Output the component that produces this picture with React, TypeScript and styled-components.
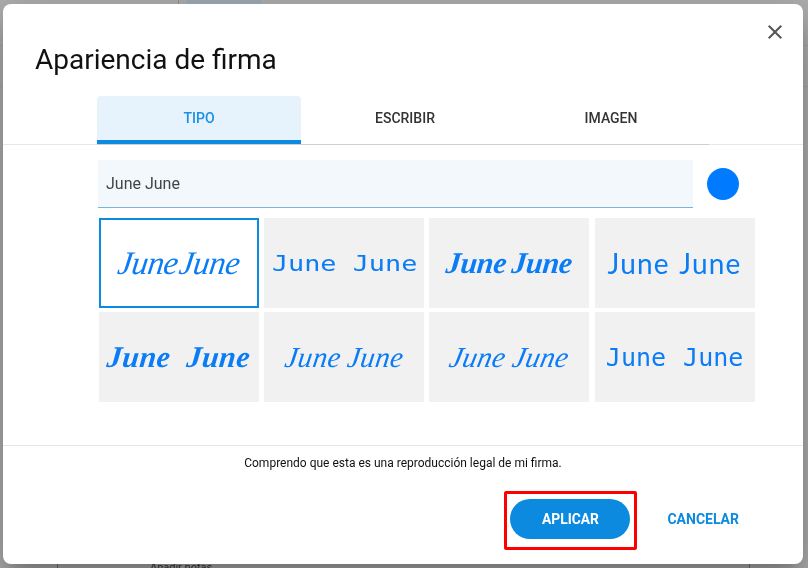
import React from "react";
import styled, { createGlobalStyle } from "styled-components";

const GlobalStyle = createGlobalStyle`
  html, body {
    margin: 0;
    height: 100%;
    overflow: hidden;
    font-family: Roboto, "Liberation Sans", sans-serif;
  }
`;

/* the document that sits dimmed behind the dialog */
const Page = styled.div`
  width: 808px;
  height: 568px;
  background: #adadad;
  display: flex;
  flex-direction: column;
  overflow: hidden;
`;

const PageBar = styled.div`
  height: 46px;
  flex: none;
  box-sizing: border-box;
  display: flex;
  align-items: flex-start;
  border-bottom: 1px solid #a2a2a2;
`;

const BarTool = styled.div`
  width: 59px;
  height: 4px;
  margin-left: 50px;
  overflow: hidden;
`;

const BarDivider = styled.div`
  width: 1px;
  height: 5px;
  margin-left: 69px;
  background: #8f8f8f;
`;

const BarActive = styled.div`
  width: 74px;
  height: 4px;
  margin-left: 8px;
  background: #9daab5;
  overflow: hidden;
`;

const PageBarLow = styled.div`
  height: 41px;
  flex: none;
  box-sizing: border-box;
  border-bottom: 1px solid #a2a2a2;
`;

const PageBody = styled.div`
  flex: 1;
  display: flex;
  align-items: flex-end;
  padding-left: 57px;
`;

const PageSheet = styled.div`
  width: 693px;
  height: 14px;
  box-sizing: border-box;
  padding: 7px 0 0 92px;
  border-left: 1px solid #6f6f6f;
  border-right: 1px solid #6f6f6f;
  font-size: 11px;
  line-height: 14px;
  white-space: nowrap;
  color: #333;
`;

const Overlay = styled.div`
  position: fixed;
  inset: 0;
  display: flex;
  align-items: center;
  justify-content: center;
  padding-right: 2px;
`;

const Dialog = styled.div`
  width: 800px;
  height: 560px;
  background: #fff;
  border-radius: 8px;
  display: flex;
  flex-direction: column;
  position: relative;
  box-shadow: 0 11px 15px -7px rgba(0, 0, 0, 0.2), 0 24px 38px 3px rgba(0, 0, 0, 0.14),
    0 9px 46px 8px rgba(0, 0, 0, 0.12);
`;

const CloseButton = styled.button`
  position: absolute;
  top: 16px;
  right: 16px;
  width: 24px;
  height: 24px;
  padding: 0;
  border: 0;
  background: none;
  color: #555;
  display: flex;
`;

const Title = styled.h2`
  margin: 0;
  padding: 38px 0 0 32px;
  height: 92px;
  box-sizing: border-box;
  font-size: 28px;
  line-height: 36px;
  font-weight: 400;
  color: #111;
`;

const TabsRow = styled.div`
  flex: none;
  padding-left: 94px;
  border-bottom: 1px solid #e8e8e8;
  height: 49px;
  box-sizing: border-box;
`;

const TabList = styled.div`
  display: flex;
  gap: 2px;
  width: 612px;
  height: 49px;
  box-sizing: border-box;
  border-bottom: 1px solid #cfcfcf;
`;

const Tab = styled.div<{ $active?: boolean }>`
  flex: none;
  width: 204px;
  height: 48px;
  box-sizing: border-box;
  display: flex;
  align-items: center;
  justify-content: center;
  font-size: 14px;
  font-weight: 500;
  border-radius: 4px 4px 0 0;
  color: ${(p) => (p.$active ? "#1a8fe3" : "#333")};
  background: ${(p) => (p.$active ? "#e7f3fc" : "transparent")};
  border-bottom: 4px solid ${(p) => (p.$active ? "#0b8ae0" : "transparent")};
`;

const NameRow = styled.div`
  display: flex;
  align-items: center;
  gap: 14px;
  margin: 15px 0 0 95px;
`;

const NameField = styled.div`
  width: 595px;
  height: 48px;
  box-sizing: border-box;
  padding: 0 8px;
  display: flex;
  align-items: center;
  background: #f3f8fc;
  border-bottom: 1px solid #7db3da;
  font-size: 16px;
  color: #444;
`;

const ColorDot = styled.div`
  width: 32px;
  height: 32px;
  border-radius: 50%;
  background: #007bff;
`;

const SignatureGrid = styled.div`
  display: grid;
  grid-template-columns: repeat(4, 160px);
  grid-auto-rows: 90px;
  column-gap: 5.2px;
  row-gap: 4px;
  margin: 10px 0 0 96px;
`;

type SigProps = {
  $family: string;
  $size: number;
  $weight: number;
  $italic?: boolean;
  $spacing?: number;
  $words?: number;
  $selected?: boolean;
};

const SignatureCell = styled.div<SigProps>`
  box-sizing: border-box;
  display: flex;
  align-items: center;
  justify-content: center;
  white-space: nowrap;
  overflow: hidden;
  color: #0a7cf5;
  background: ${(p) => (p.$selected ? "#fff" : "#f1f1f1")};
  border: ${(p) => (p.$selected ? "2px solid #0b8ae0" : "0")};
  font-family: ${(p) => p.$family};
  font-size: ${(p) => p.$size}px;
  font-weight: ${(p) => p.$weight};
  font-style: ${(p) => (p.$italic ? "italic" : "normal")};
  letter-spacing: ${(p) => p.$spacing ?? 0}px;
  word-spacing: ${(p) => p.$words ?? 0}px;
`;

const SignatureText = styled.span<{ $skew?: number; $stretch?: number }>`
  display: inline-block;
  transform: skewX(${(p) => p.$skew ?? 0}deg) scaleX(${(p) => p.$stretch ?? 1});
`;

const Footer = styled.div`
  margin-top: 43px;
  border-top: 1px solid #e5e5e5;
  flex: 1;
  display: flex;
  flex-direction: column;
  align-items: center;
`;

const LegalNote = styled.p`
  margin: 10px 0 0;
  font-size: 12px;
  line-height: 14px;
  color: #111;
`;

const Actions = styled.div`
  align-self: flex-end;
  display: flex;
  align-items: center;
  margin-top: 21px;
  padding-right: 64px;
  gap: 30px;
`;

const Highlight = styled.div`
  box-sizing: border-box;
  width: 133px;
  height: 59px;
  border: 3px solid #f00;
  border-radius: 2px;
  display: flex;
  align-items: center;
  justify-content: center;
  padding: 0 1px 3px 0;
`;

const PrimaryButton = styled.button`
  flex: none;
  width: 120px;
  height: 40px;
  border: 0;
  border-radius: 20px;
  background: #0b8ae0;
  color: #fff;
  font: 700 13.8px Roboto, sans-serif;
`;

const TextButton = styled.button`
  border: 0;
  padding: 0;
  margin-top: -3px;
  background: none;
  color: #0b8ae0;
  font: 700 14px Roboto, sans-serif;
`;

const SERIF = '"Liberation Serif", serif';
const LATO = "Lato, sans-serif";
const MONO = '"DejaVu Sans Mono", monospace';

const signatures = [
  { $family: SERIF, $size: 33, $weight: 400, $italic: true, skew: -8, $spacing: -0.6, $words: -6, $selected: true },
  { $family: MONO, $size: 22, $weight: 400, stretch: 1.22, $words: 0 },
  { $family: SERIF, $size: 30, $weight: 700, $italic: true, skew: -6, $spacing: -0.3, $words: -2 },
  { $family: LATO, $size: 28, $weight: 400, $spacing: 1.2, $words: 2 },
  { $family: SERIF, $size: 30, $weight: 700, $italic: true, skew: -6, $spacing: 0.5, $words: 8 },
  { $family: SERIF, $size: 29, $weight: 400, $italic: true, skew: -8, $spacing: 0.3, $words: -1 },
  { $family: SERIF, $size: 29, $weight: 400, $italic: true, skew: -12, $spacing: 0.2, $words: 0 },
  { $family: MONO, $size: 25, $weight: 400, $words: 2 },
];

export default function App() {
  return (
    <>
      <GlobalStyle />
      <Page>
        <PageBar>
          <BarTool>
            <svg width="59" height="4" viewBox="0 0 59 4">
              <path d="M20 4 L22 0 M26 1 L24 4 M30 0 L28 3" stroke="#333" strokeWidth="1.6" fill="none" />
            </svg>
          </BarTool>
          <BarDivider />
          <BarActive>
            <svg width="74" height="4" viewBox="0 0 74 4">
              <path d="M29 4 L31 0 M36 0 L34 4 M41 0 L39 2" stroke="#0d5f9f" strokeWidth="1.8" fill="none" />
            </svg>
          </BarActive>
        </PageBar>
        <PageBarLow />
        <PageBody>
          <PageSheet>Añadir notas</PageSheet>
        </PageBody>
      </Page>
      <Overlay>
        <Dialog>
          <CloseButton aria-label="Cerrar">
            <svg width="24" height="24" viewBox="0 0 24 24" fill="currentColor">
              <path d="M19 6.41L17.59 5 12 10.59 6.41 5 5 6.41 10.59 12 5 17.59 6.41 19 12 13.41 17.59 19 19 17.59 13.41 12z" />
            </svg>
          </CloseButton>
          <Title>Apariencia de firma</Title>
          <TabsRow>
            <TabList>
              <Tab $active>TIPO</Tab>
              <Tab>ESCRIBIR</Tab>
              <Tab>IMAGEN</Tab>
            </TabList>
          </TabsRow>
          <NameRow>
            <NameField>June June</NameField>
            <ColorDot />
          </NameRow>
          <SignatureGrid>
            {signatures.map(({ skew, stretch, ...s }, i) => (
              <SignatureCell key={i} {...s}>
                <SignatureText $skew={skew} $stretch={stretch}>
                  June June
                </SignatureText>
              </SignatureCell>
            ))}
          </SignatureGrid>
          <Footer>
            <LegalNote>Comprendo que esta es una reproducción legal de mi firma.</LegalNote>
            <Actions>
              <Highlight>
                <PrimaryButton>APLICAR</PrimaryButton>
              </Highlight>
              <TextButton>CANCELAR</TextButton>
            </Actions>
          </Footer>
        </Dialog>
      </Overlay>
    </>
  );
}
